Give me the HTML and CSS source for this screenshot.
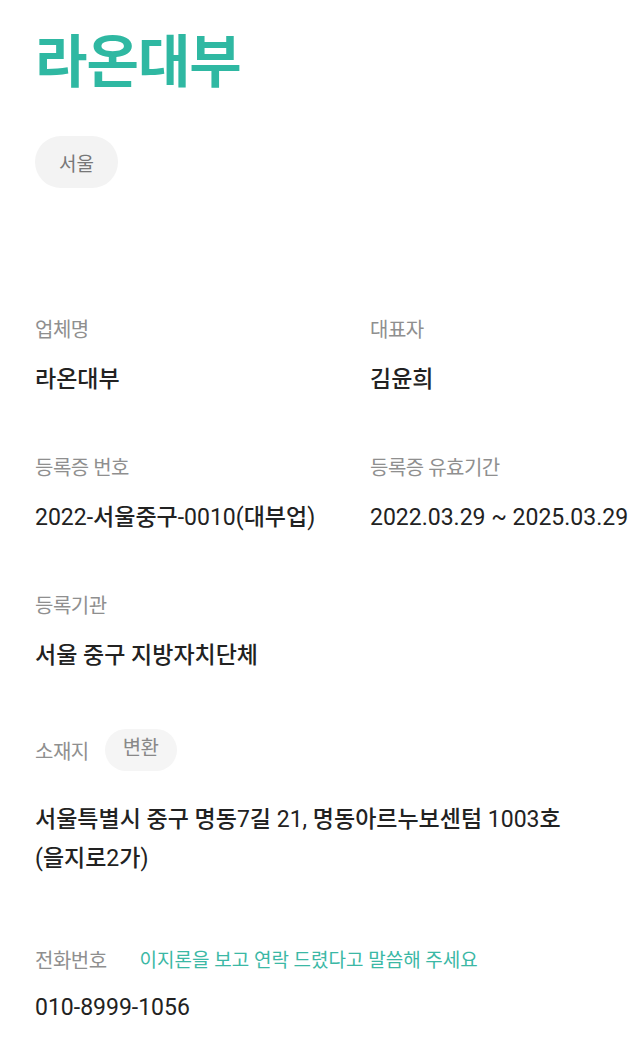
FILE: index.html
```html
<!DOCTYPE html>
<html lang="ko">
<head>
<meta charset="utf-8">
<link rel="stylesheet" href="styles.css">
</head>
<body>
<main class="page">
  <h1 class="title">라온대부</h1>
  <div class="tags"><span class="tag">서울</span></div>

  <section class="grid">
    <div class="field">
      <div class="label">업체명</div>
      <div class="value">라온대부</div>
    </div>
    <div class="field">
      <div class="label">대표자</div>
      <div class="value">김윤희</div>
    </div>
    <div class="field">
      <div class="label">등록증 번호</div>
      <div class="value"><span class="num">2022-</span>서울중구<span class="num">-0010(</span>대부업<span class="num">)</span></div>
    </div>
    <div class="field">
      <div class="label">등록증 유효기간</div>
      <div class="value"><span class="num">2022.03.29 ~ 2025.03.29</span></div>
    </div>
    <div class="field full">
      <div class="label">등록기관</div>
      <div class="value">서울 중구 지방자치단체</div>
    </div>
    <div class="field full">
      <div class="label row"><span class="label-text shifted">소재지</span><span class="chip">변환</span></div>
      <div class="value multi">서울특별시 중구 명동<span class="num">7</span>길 <span class="num">21,</span> 명동아르누보센텀 <span class="num">1003</span>호<br><span class="num">(</span>을지로<span class="num">2</span>가<span class="num">)</span></div>
    </div>
    <div class="field full phone">
      <div class="label row"><span class="label-text">전화번호</span><span class="hint">이지론을 보고 연락 드렸다고 말씀해 주세요</span></div>
      <div class="value phone-value"><span class="num">010-8999-1056</span></div>
    </div>
  </section>
</main>
</body>
</html>
```

FILE: styles.css
```css
* { box-sizing: border-box; }
html, body { margin: 0; padding: 0; background: #fff; }
body {
  font-family: Roboto, "Noto Sans CJK KR", sans-serif;
  color: #222;
}
.page { padding: 0 0 0 35px; }
.title {
  margin: 0;
  padding-top: 22px;
  font-size: 57px;
  line-height: 70px;
  font-weight: 700;
  color: #2fb8a2;
  font-family: "Noto Sans CJK KR", sans-serif;
  letter-spacing: -1px;
}
.tags { margin-top: 44px; display: flex; }
.tag {
  display: inline-flex;
  align-items: center;
  justify-content: center;
  height: 52px;
  padding: 0 24px;
  border-radius: 26px;
  background: #f3f3f3;
  color: #777;
  font-size: 19px;
}
.grid {
  margin-top: 127px;
  display: grid;
  grid-template-columns: 335px 1fr;
  row-gap: 58px;
}
.field.full { grid-column: 1 / -1; }
.field.phone { margin-top: 10px; }
.label {
  font-size: 20px;
  line-height: 30px;
  color: #8f8f8f;
  letter-spacing: -0.5px;
}
.label.row { display: flex; align-items: center; }
.label-text.shifted { padding-top: 4px; }
.value {
  margin-top: 20px;
  font-size: 23px;
  line-height: 30px;
  font-weight: 500;
  color: #222;
  white-space: nowrap;
}
.num { font-weight: 400; }
.value.multi { line-height: 39px; margin-top: 29px; }
.phone-value { margin-top: 17px; }
.chip {
  display: inline-flex;
  align-items: center;
  height: 42px;
  padding: 0 18px 4px;
  margin-left: 16px;
  border-radius: 21px;
  background: #f5f5f5;
  color: #888;
  font-size: 20px;
}
.hint {
  margin-left: 33px;
  font-size: 19px;
  color: #3bb8a5;
  letter-spacing: 0;
}
```
